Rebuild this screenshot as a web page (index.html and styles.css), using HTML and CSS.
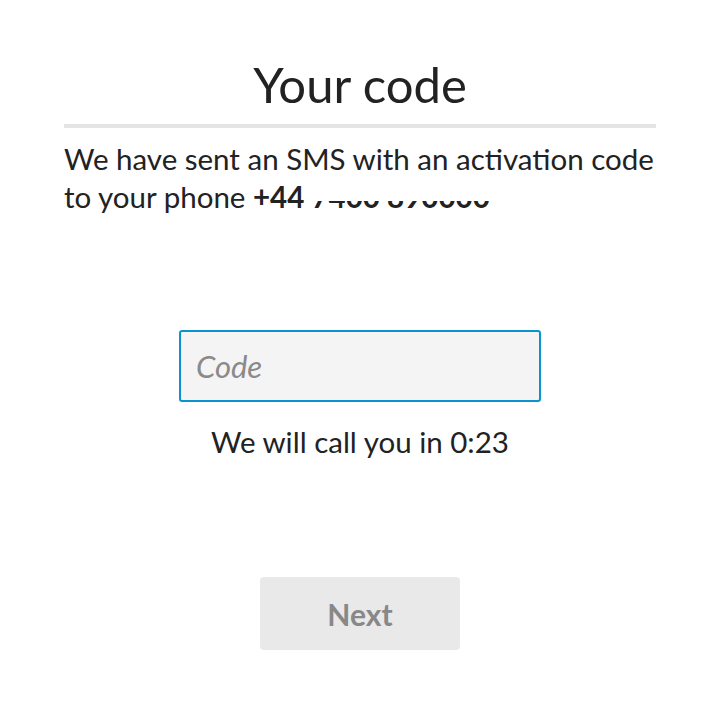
FILE: index.html
```html
<!DOCTYPE html>
<html lang="en">
<head>
<meta charset="utf-8">
<title>Your code</title>
<link rel="stylesheet" href="styles.css">
</head>
<body>
<main class="screen">
  <h1 class="title">Your code</h1>
  <div class="divider"></div>
  <p class="message">We have sent an SMS with an activation code to your phone <strong>+44 <span class="masked">7400 890000</span></strong></p>
  <div class="field">
    <input class="code-input" type="text" placeholder="Code">
  </div>
  <p class="countdown">We will call you in 0:23</p>
  <div class="actions">
    <button class="next-btn" type="button">Next</button>
  </div>
</main>
</body>
</html>
```

FILE: styles.css
```css
html, body {
  margin: 0;
  padding: 0;
  background: #ffffff;
}

body {
  font-family: Lato, "Open Sans", "DejaVu Sans", sans-serif;
  color: #222222;
}

.screen {
  width: 720px;
  height: 720px;
  box-sizing: border-box;
  padding: 54px 64px 0 64px;
  display: flex;
  flex-direction: column;
}

.title {
  margin: 0;
  text-align: center;
  font-size: 49px;
  font-weight: 400;
  line-height: 60px;
  color: #222222;
}

.divider {
  height: 4px;
  background: #e5e5e5;
  margin-top: 10px;
}

.message {
  margin: 12px 0 0 0;
  font-size: 29.5px;
  line-height: 38px;
}

.message strong {
  font-weight: 700;
}

.masked {
  clip-path: inset(22px 0 0 0);
}

.field {
  display: flex;
  justify-content: center;
  margin-top: 114px;
}

.code-input {
  width: 362px;
  height: 72px;
  box-sizing: border-box;
  border: 2px solid #0a94cf;
  border-radius: 3px;
  background: #f4f4f4;
  padding: 0 15px;
  font-family: Lato, "Open Sans", sans-serif;
  font-size: 31px;
  color: #222222;
  outline: none;
}

.code-input::placeholder {
  color: #8a8a8a;
  font-style: italic;
}

.countdown {
  margin: 20px 0 0 0;
  text-align: center;
  font-size: 29.5px;
  line-height: 40px;
}

.actions {
  display: flex;
  justify-content: center;
  margin-top: 115px;
}

.next-btn {
  width: 200px;
  height: 73px;
  border: none;
  border-radius: 4px;
  background: #e9e9e9;
  color: #888888;
  font-family: Lato, "Open Sans", sans-serif;
  font-size: 30px;
  font-weight: 700;
  cursor: default;
}
```
